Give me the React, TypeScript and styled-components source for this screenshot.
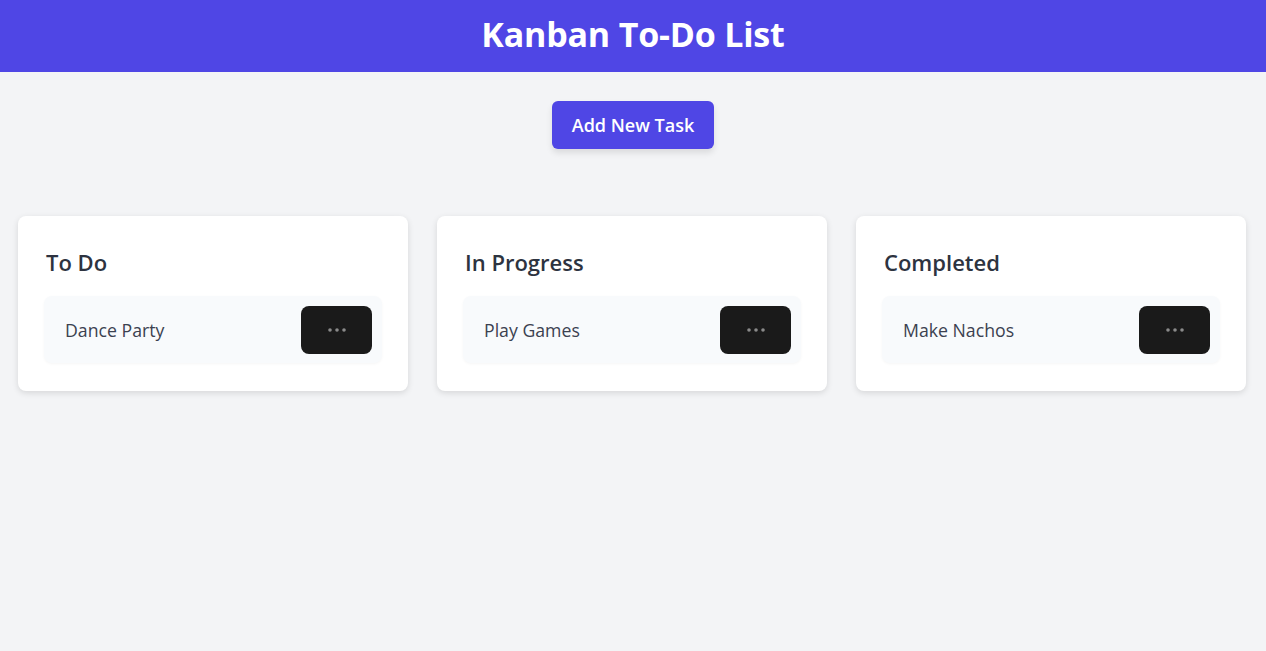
import React from "react";
import styled, { createGlobalStyle } from "styled-components";

const Global = createGlobalStyle`
  * { box-sizing: border-box; }
  html, body { margin: 0; padding: 0; background: #f3f4f6; }
  body { font-family: "Open Sans", "Noto Sans", "Liberation Sans", sans-serif; color: #374151; }
`;

const Page = styled.div`
  min-height: 651px;
  background: #f3f4f6;
`;

const Header = styled.header`
  height: 72px;
  background: #4f46e5;
  display: flex;
  align-items: center;
  justify-content: center;
  padding-bottom: 5px;
`;

const Title = styled.h1`
  margin: 0;
  color: #ffffff;
  font-size: 34px;
  line-height: 40px;
  font-weight: 700;
  letter-spacing: -0.2px;
`;

const Toolbar = styled.div`
  display: flex;
  justify-content: center;
  padding-top: 29px;
`;

const AddButton = styled.button`
  height: 48px;
  padding: 0 20px;
  border: none;
  border-radius: 6px;
  background: #4f46e5;
  color: #ffffff;
  font-family: inherit;
  font-size: 18px;
  font-weight: 600;
  box-shadow: 0 4px 6px rgba(0, 0, 0, 0.1);
  cursor: pointer;
`;

const Board = styled.main`
  display: grid;
  grid-template-columns: repeat(3, 390px);
  gap: 29px;
  padding: 67px 0 0 18px;
`;

const Column = styled.section`
  background: #ffffff;
  border-radius: 8px;
  padding: 26px 26px 28px;
  box-shadow: 0 2px 6px rgba(0, 0, 0, 0.12);
`;

const ColumnTitle = styled.h2`
  margin: 0 0 14px 2px;
  font-size: 22px;
  font-weight: 600;
  color: #2d3340;
  line-height: 40px;
`;

const TaskItem = styled.div`
  display: flex;
  align-items: center;
  justify-content: space-between;
  height: 67px;
  padding: 0 10px 0 21px;
  background: #f8fafc;
  border-radius: 8px;
  box-shadow: 0 1px 3px rgba(0, 0, 0, 0.04);
`;

const TaskText = styled.span`
  font-size: 17.7px;
  color: #3b4150;
`;

const MenuButton = styled.button`
  width: 71px;
  height: 48px;
  border: none;
  border-radius: 8px;
  background: #1a1a1a;
  display: flex;
  align-items: center;
  justify-content: center;
  cursor: pointer;
`;

const Dots = () => (
  <svg width="18" height="4" viewBox="0 0 18 4">
    <circle cx="2" cy="2" r="1.8" fill="#8a8a8a" />
    <circle cx="9" cy="2" r="1.8" fill="#8a8a8a" />
    <circle cx="16" cy="2" r="1.8" fill="#8a8a8a" />
  </svg>
);

const columns = [
  { title: "To Do", tasks: ["Dance Party"] },
  { title: "In Progress", tasks: ["Play Games"] },
  { title: "Completed", tasks: ["Make Nachos"] },
];

export default function App() {
  return (
    <Page>
      <Global />
      <Header>
        <Title>Kanban To-Do List</Title>
      </Header>
      <Toolbar>
        <AddButton>Add New Task</AddButton>
      </Toolbar>
      <Board>
        {columns.map((c) => (
          <Column key={c.title}>
            <ColumnTitle>{c.title}</ColumnTitle>
            {c.tasks.map((t) => (
              <TaskItem key={t}>
                <TaskText>{t}</TaskText>
                <MenuButton aria-label="More">
                  <Dots />
                </MenuButton>
              </TaskItem>
            ))}
          </Column>
        ))}
      </Board>
    </Page>
  );
}
